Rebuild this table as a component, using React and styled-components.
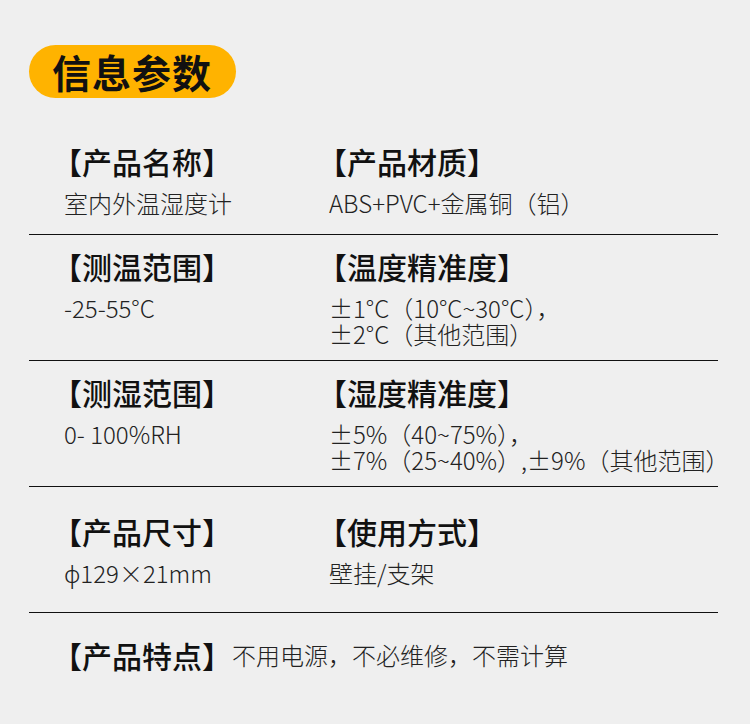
import React from "react";
import styled, { createGlobalStyle } from "styled-components";

const GlobalStyle = createGlobalStyle`
  html, body {
    margin: 0;
    padding: 0;
    background: #efefef;
  }
  body {
    font-family: "Noto Sans CJK SC", "Noto Sans", sans-serif;
    color: #111;
  }
`;

const Page = styled.div`
  width: 750px;
  min-height: 724px;
  background: #efefef;
  box-sizing: border-box;
  padding: 0 32px 0 29px;
`;

const Header = styled.div`
  height: 117px;
  padding-top: 45px;
  box-sizing: border-box;
`;

const Pill = styled.div`
  display: inline-flex;
  align-items: center;
  height: 53px;
  padding: 0 24px 0 23px;
  border-radius: 27px;
  background: #ffb300;
  color: #111;
  font-size: 39px;
  font-weight: 700;
  letter-spacing: 1px;
  line-height: 1;
`;

const Row = styled.div`
  display: grid;
  grid-template-columns: 265px 1fr;
  align-content: center;
  height: ${p => p.$h ?? 126}px;
  padding: ${p => p.$top ?? 0}px 0 0 23px;
  box-sizing: border-box;
  border-bottom: 1px solid #111;
`;

const Cell = styled.div`
  display: flex;
  flex-direction: column;
`;

const Title = styled.div`
  font-size: 30px;
  font-weight: 500;
  line-height: 36px;
  color: #111;
  white-space: nowrap;
`;

const Value = styled.div`
  margin-top: 11px;
  padding-left: 12px;
  font-size: 24px;
  font-weight: 300;
  line-height: 26px;
  color: #222;
  white-space: nowrap;
`;

const Feature = styled.div`
  display: flex;
  align-items: center;
  padding: 24px 0 0 23px;
`;

const FeatureText = styled.span`
  font-size: 24px;
  font-weight: 300;
  line-height: 36px;
  color: #222;
`;

const rows = [
  {
    h: 118,
    top: 8,
    items: [
      { title: "【产品名称】", lines: ["室内外温湿度计"] },
      { title: "【产品材质】", lines: ["ABS+PVC+金属铜（铝）"] },
    ],
  },
  {
    items: [
      { title: "【测温范围】", lines: ["-25-55°C"] },
      { title: "【温度精准度】", lines: ["±1°C（10°C~30°C），", "±2°C（其他范围）"] },
    ],
  },
  {
    items: [
      { title: "【测湿范围】", lines: ["0- 100%RH"] },
      { title: "【湿度精准度】", lines: ["±5%（40~75%），", "±7%（25~40%）,±9%（其他范围）"] },
    ],
  },
  {
    items: [
      { title: "【产品尺寸】", lines: ["ϕ129×21mm"] },
      { title: "【使用方式】", lines: ["壁挂/支架"] },
    ],
  },
];

export default function App() {
  return (
    <Page>
      <GlobalStyle />
      <Header>
        <Pill>信息参数</Pill>
      </Header>
      {rows.map((row, i) => (
        <Row key={i} $h={row.h} $top={row.top}>
          {row.items.map(item => (
            <Cell key={item.title}>
              <Title>{item.title}</Title>
              <Value>
                {item.lines.map((l, j) => (
                  <React.Fragment key={j}>
                    {j > 0 && <br />}
                    {l}
                  </React.Fragment>
                ))}
              </Value>
            </Cell>
          ))}
        </Row>
      ))}
      <Feature>
        <Title>【产品特点】</Title>
        <FeatureText>不用电源，不必维修，不需计算</FeatureText>
      </Feature>
    </Page>
  );
}
